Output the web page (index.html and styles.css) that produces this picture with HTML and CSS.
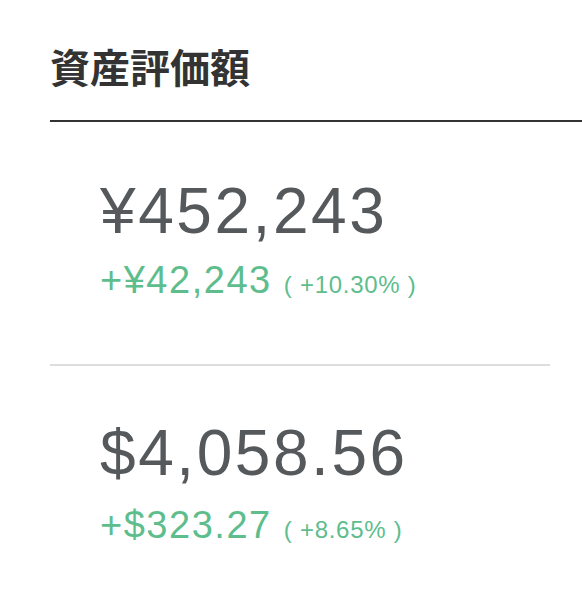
FILE: index.html
```html
<!DOCTYPE html>
<html lang="ja">
<head>
    <meta charset="UTF-8">
    <meta name="viewport" content="width=device-width, initial-scale=1.0">
    <title>資産評価額</title>
    <link rel="stylesheet" href="styles.css">
</head>
<body>
    <div class="page">
        <h1 class="title">資産評価額</h1>

        <!-- 円建て -->
        <div class="asset">
            <div class="amount">¥452,243</div>
            <div class="change">+¥42,243 <span class="rate">( +10.30% )</span></div>
        </div>

        <!-- ドル建て -->
        <div class="asset last">
            <div class="amount">$4,058.56</div>
            <div class="change">+$323.27 <span class="rate">( +8.65% )</span></div>
        </div>
    </div>
</body>
</html>
```

FILE: styles.css
```css
body { margin: 0; background: #fff; font-family: "Liberation Sans", Arial, "Noto Sans CJK JP", sans-serif; }
.page { padding: 42px 0 0 50px; }
.title { margin: 0; padding-bottom: 30px; font-family: "Noto Sans CJK JP", sans-serif; font-size: 40px; font-weight: bold; line-height: 48px; color: #333; border-bottom: 2px solid #333; }
.asset { margin-right: 32px; padding: 53px 0 57px 50px; border-bottom: 2px solid #ddd; }
.asset.last { padding-top: 51px; border-bottom: none; }
.amount { font-size: 64px; line-height: 72px; letter-spacing: 0.04em; color: #55595c; }
.change { margin-top: 11px; font-size: 38px; line-height: 44px; letter-spacing: 0.04em; color: #5ebd8d; }
.last .change { margin-top: 14px; }
.rate { font-size: 24px; letter-spacing: 0.03em; }
```
